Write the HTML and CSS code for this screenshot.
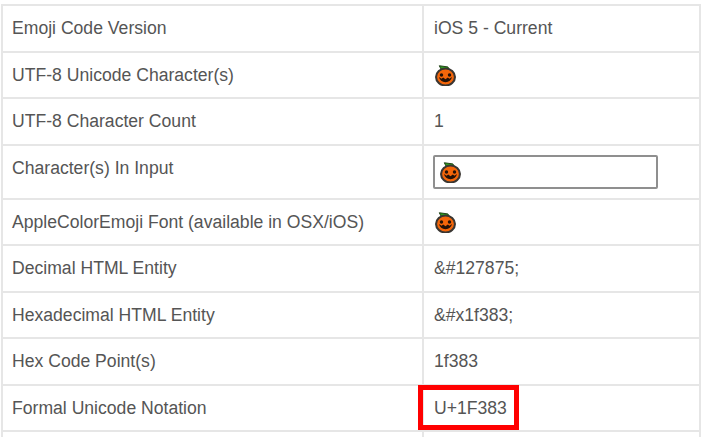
FILE: index.html
```html
<!DOCTYPE html>
<html lang="en">
<head>
<meta charset="utf-8">
<title>Emoji details</title>
<link rel="stylesheet" href="styles.css">
</head>
<body>
<svg class="defs" width="0" height="0" aria-hidden="true">
  <symbol id="pumpkin" viewBox="0 0 22 22">
    <path d="M4.5 0.8 L13.5 2 L16 6.5 L8 7.5 Z" fill="#2c9a1c" stroke="#1c3d14" stroke-width="1"/>
    <ellipse cx="11" cy="12.5" rx="9.9" ry="8.9" fill="#f4660a" stroke="#3a3632" stroke-width="2.2"/>
    <circle cx="6.8" cy="10.4" r="1.8" fill="#241208"/>
    <circle cx="15.2" cy="10.4" r="1.8" fill="#241208"/>
    <path d="M4.2 12.6 Q5.4 18 11 18 Q16.6 18 17.8 12.6 L15.2 14.4 L13.4 13.2 L11 14.8 L8.6 13.2 L6.8 14.4 Z" fill="#241208"/>
  </symbol>
</svg>
<main class="page">
  <table class="info">
    <tr><td class="label">Emoji Code Version</td><td class="value">iOS 5 - Current</td></tr>
    <tr><td class="label">UTF-8 Unicode Character(s)</td><td class="value"><svg class="emoji"><use href="#pumpkin"/></svg></td></tr>
    <tr><td class="label">UTF-8 Character Count</td><td class="value">1</td></tr>
    <tr class="input-row"><td class="label">Character(s) In Input</td><td class="value"><div class="char-input"><svg class="emoji in-field"><use href="#pumpkin"/></svg></div></td></tr>
    <tr><td class="label">AppleColorEmoji Font (available in OSX/iOS)</td><td class="value"><svg class="emoji"><use href="#pumpkin"/></svg></td></tr>
    <tr><td class="label">Decimal HTML Entity</td><td class="value">&amp;#127875;</td></tr>
    <tr><td class="label">Hexadecimal HTML Entity</td><td class="value">&amp;#x1f383;</td></tr>
    <tr><td class="label">Hex Code Point(s)</td><td class="value">1f383</td></tr>
    <tr><td class="label">Formal Unicode Notation</td><td class="value"><span class="highlighted">U+1F383</span></td></tr>
    <tr><td class="label">&nbsp;</td><td class="value">&nbsp;</td></tr>
  </table>
</main>
</body>
</html>
```
FILE: styles.css
```css
html, body {
  margin: 0;
  height: 437px;
  overflow: hidden;
  background: #fff;
}
.defs {
  position: absolute;
}
.page {
  height: 433px;
  overflow: hidden;
  padding: 4px 2px 0 1px;
}
.info {
  width: 700px;
  border-collapse: collapse;
  table-layout: fixed;
  font-family: "Liberation Sans", Arial, sans-serif;
  font-size: 17.6px;
  line-height: 20px;
  color: #555;
}
.info td {
  height: 46.5px;
  box-sizing: border-box;
  padding: 12px 9px 0;
  border: 2px solid #e6e6e6;
  vertical-align: top;
}
.info td.label {
  width: 421px;
}
.info td.value {
  padding-left: 10px;
}
.input-row td {
  height: 54px;
}
.emoji {
  display: block;
  width: 21px;
  height: 21px;
  margin-left: 1px;
}
.emoji.in-field {
  margin-left: 0;
}
.char-input {
  box-sizing: border-box;
  width: 225px;
  height: 34px;
  margin: -3px 0 0 -1px;
  padding: 5px;
  border: 2px solid #8f8f8f;
  border-radius: 2px;
}
.highlighted {
  position: relative;
  display: inline-block;
}
.highlighted::after {
  content: "";
  position: absolute;
  left: -16px;
  top: -13px;
  width: 101px;
  height: 45px;
  box-sizing: border-box;
  border: 5px solid #f00;
}
```
